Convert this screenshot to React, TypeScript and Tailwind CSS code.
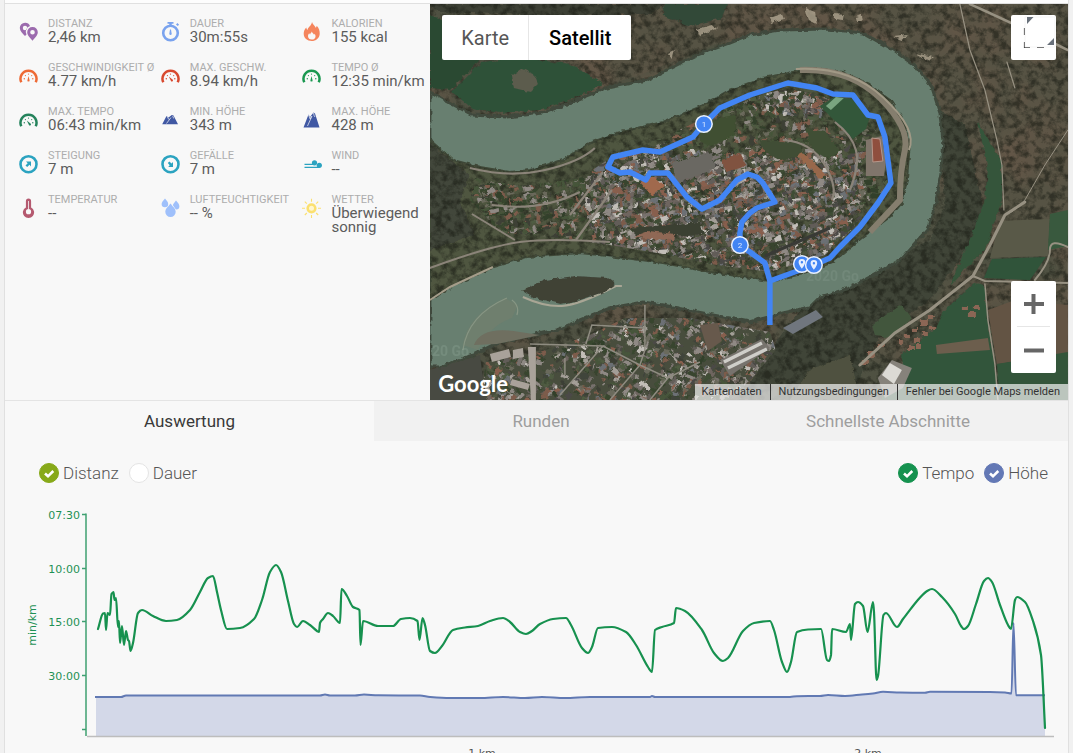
import { useId } from "react";
import type { ReactNode } from "react";

type Point = [number, number];

/* ---------- helpers ---------- */

// Monotone cubic through the points, so peaks never overshoot
function monotonePath(pts: Point[]): string {
  const n = pts.length;
  const slopes: number[] = [];
  for (let i = 0; i < n - 1; i++) {
    slopes.push((pts[i + 1][1] - pts[i][1]) / (pts[i + 1][0] - pts[i][0]));
  }
  const tangents = pts.map((_, i) => {
    if (i === 0) return slopes[0];
    if (i === n - 1) return slopes[n - 2];
    const a = slopes[i - 1];
    const b = slopes[i];
    return a * b <= 0 ? 0 : (2 * a * b) / (a + b);
  });
  let d = `M${pts[0][0]} ${pts[0][1]}`;
  for (let i = 0; i < n - 1; i++) {
    const [x0, y0] = pts[i];
    const [x1, y1] = pts[i + 1];
    const h = (x1 - x0) / 3;
    d += `C${(x0 + h).toFixed(1)} ${(y0 + h * tangents[i]).toFixed(1)} ${(x1 - h).toFixed(1)} ${(y1 - h * tangents[i + 1]).toFixed(1)} ${x1} ${y1}`;
  }
  return d;
}

function seeded(seed: number) {
  let s = seed;
  return () => {
    s = (s * 16807) % 2147483647;
    return s / 2147483647;
  };
}

/* ---------- stat icons ---------- */

function Icon({ children }: { children: ReactNode }) {
  return (
    <svg viewBox="0 0 20 20" className="mt-1 size-5 shrink-0" aria-hidden="true">
      {children}
    </svg>
  );
}

function PinsIcon() {
  return (
    <Icon>
      <path d="M6 .8a5.2 5.2 0 0 0-5.2 5.2c0 3 3 5.600 5.200 8l1.500-1.600A6 6 0 0 1 11 3.900 5.200 5.200 0 0 0 6 .8zm0 3a2.200 2.200 0 1 1 0 4.400 2.200 2.200 0 0 1 0-4.400z" fill="#9c6bae" fillRule="evenodd" />
      <path d="M13.500 5a5.200 5.200 0 0 0-5.300 5.200c0 3.200 3.300 6 5.300 8.600 2-2.600 5.300-5.400 5.300-8.600A5.200 5.200 0 0 0 13.500 5zm0 2.900a2.300 2.300 0 1 1 0 4.600 2.300 2.300 0 0 1 0-4.600z" fill="#9c6bae" fillRule="evenodd" />
    </Icon>
  );
}

function StopwatchIcon() {
  return (
    <Icon>
      <circle cx="9.500" cy="11" r="7.300" fill="none" stroke="#7aa3ee" strokeWidth="2.600" />
      <path d="M6.500 0h6v1.800h-1.800v2h-2.400v-2H6.500zM15 2.400l1.400-1.400 1.700 1.700-1.400 1.400z" fill="#7aa3ee" />
      <path d="M9 7.500h1l.7 4.200a1.200 1.200 0 1 1-2.400 0z" fill="#7aa3ee" />
    </Icon>
  );
}

function FlameIcon() {
  return (
    <Icon>
      <path d="M10 0c.8 2.500 2.800 3.600 3.700 5.800.6-.4.900-1.200 1-2 2.200 2.300 3.200 5.200 3 8.200-.3 4.300-3.700 7-8 7-4.400 0-8-2.800-8-7.200 0-2.600 1-4.800 2.600-6.300.1 1.200.5 2 1.200 2.400C5.800 5.400 9.600 3.500 10 0z" fill="#f5855d" />
      <path d="M9.800 9.500c.3 1.500 2 2 2.200 3.200.4-.2.500-.5.600-1 1 1.300 1.200 2.700.6 4-.6 1.200-1.900 1.900-3.400 1.900-2.200 0-3.800-1.300-3.800-3.300 0-1.300.6-2.300 1.300-3 .1.700.4 1.100.8 1.200 0-1.200 1.400-1.600 1.700-3z" fill="#f8f8f8" />
    </Icon>
  );
}

function GaugeIcon({ color, fast }: { color: string; fast?: boolean }) {
  return (
    <Icon>
      <path d="M2.300 16.200A8 8 0 1 1 16.700 16.200" fill="none" stroke={color} strokeWidth="2.500" />
      <g fill={color}>
        <circle cx="5.300" cy="12.800" r=".7" />
        <circle cx="6.400" cy="9.600" r=".6" />
        <circle cx="9.500" cy="8.100" r=".6" />
        <circle cx="12.700" cy="9.600" r=".6" />
        <circle cx="13.800" cy="12.800" r=".7" />
        {fast ? (
          <path d="M7.800 10.500l4 3.200a1.200 1.200 0 0 1-1.600 1.700z" />
        ) : (
          <path d="M9.500 10l1 4a1.100 1.100 0 1 1-2 0z" />
        )}
      </g>
    </Icon>
  );
}

function MountainIcon({ high }: { high?: boolean }) {
  return (
    <Icon>
      {high ? (
        <>
          <path d="M1.500 17.500L6.500 4.500l1.500 2.500 3.500-4.500 1.500 1 4.500 14z" fill="#4058a3" />
          <path d="M5.500 16L10 6M6.500 5l1.700 4 1.200-3M11.500 3l.7 3 1 1" fill="none" stroke="#f8f8f8" strokeWidth=".7" />
        </>
      ) : (
        <>
          <path d="M1.200 14.300L5.500 6l2 1.500 3.300-2.500 1.700.5 4.500 8.800z" fill="#4058a3" />
          <path d="M5.500 13.500L10 7.500M6.200 6.500l1.600 3M11.700 6l1 2.500" fill="none" stroke="#f8f8f8" strokeWidth=".7" />
        </>
      )}
    </Icon>
  );
}

function SlopeIcon({ down }: { down?: boolean }) {
  return (
    <Icon>
      <circle cx="9.500" cy="10.200" r="8" fill="none" stroke="#2ba3c0" strokeWidth="2.600" />
      {down ? (
        <path d="M6.800 9l1.600-1.600 2.100 2.100L12 8.100v4.800H7.200l1.500-1.600z" fill="#2ba3c0" />
      ) : (
        <path d="M7 7.400h5v5l-1.500-1.600-2.300 2.300-1.700-1.600 2.200-2.300z" fill="#2ba3c0" />
      )}
    </Icon>
  );
}

function WindIcon() {
  return (
    <Icon>
      <path d="M2.500 10.400h11M2.500 13.400h15" stroke="#2ba3c0" strokeWidth="1.300" />
      <circle cx="12.500" cy="8.800" r="2.600" fill="#2ba3c0" />
      <circle cx="17.300" cy="11.300" r="2.600" fill="#2ba3c0" />
    </Icon>
  );
}

function ThermometerIcon() {
  return (
    <Icon>
      <path d="M9.500.6a2.600 2.600 0 0 0-2.600 2.600v6.200a5.600 5.600 0 1 0 5.200 0V3.200A2.600 2.600 0 0 0 9.500.6z" fill="#b55a70" />
      <circle cx="9.500" cy="13.700" r="2.600" fill="#f8f8f8" />
      <path d="M9.500 3v8" stroke="#f8f8f8" strokeWidth=".8" />
    </Icon>
  );
}

function DropsIcon() {
  return (
    <Icon>
      <path d="M4 .4c1.600 2 3.200 3.500 3.200 5.500A3.200 3.200 0 0 1 .6 6C.6 4 2.400 2.400 4 .4zM15 2.500c1.700 2 3.400 3.600 3.400 5.700a3.300 3.300 0 0 1-3.500 3.200c-1-1.400-2.300-2.800-3-4.200.3-1.600 1.800-3 3.100-4.700z" fill="#9fc0fb" />
      <path d="M9.500 5.500c2.200 3 5.200 5.200 5.200 8.300a5.200 5.200 0 0 1-10.400 0c0-3.100 3-5.300 5.200-8.300z" fill="#9fc0fb" />
    </Icon>
  );
}

function SunIcon() {
  return (
    <Icon>
      <circle cx="9.500" cy="10.300" r="3.800" fill="#fff6cf" stroke="#fbe06f" strokeWidth="2.600" />
      <path d="M9.500 .7v3M9.500 17v3M0 10.300h3M16 10.300h3M2.800 3.600l2 2M14.200 15l2 2M2.800 17l2-2M14.200 5.600l2-2" stroke="#fbe06f" strokeWidth="1.100" />
    </Icon>
  );
}

const stats: { label: string; value: string; icon: ReactNode }[] = [
  { label: "Distanz", value: "2,46 km", icon: <PinsIcon /> },
  { label: "Dauer", value: "30m:55s", icon: <StopwatchIcon /> },
  { label: "Kalorien", value: "155 kcal", icon: <FlameIcon /> },
  { label: "Geschwindigkeit Ø", value: "4.77 km/h", icon: <GaugeIcon color="#ee6a35" /> },
  { label: "Max. Geschw.", value: "8.94 km/h", icon: <GaugeIcon color="#d8492f" fast /> },
  { label: "Tempo Ø", value: "12:35 min/km", icon: <GaugeIcon color="#1a9850" /> },
  { label: "Max. Tempo", value: "06:43 min/km", icon: <GaugeIcon color="#25835c" fast /> },
  { label: "Min. Höhe", value: "343 m", icon: <MountainIcon /> },
  { label: "Max. Höhe", value: "428 m", icon: <MountainIcon high /> },
  { label: "Steigung", value: "7 m", icon: <SlopeIcon /> },
  { label: "Gefälle", value: "7 m", icon: <SlopeIcon down /> },
  { label: "Wind", value: "--", icon: <WindIcon /> },
  { label: "Temperatur", value: "--", icon: <ThermometerIcon /> },
  { label: "Luftfeuchtigkeit", value: "-- %", icon: <DropsIcon /> },
  { label: "Wetter", value: "Überwiegend sonnig", icon: <SunIcon /> },
];

function StatsPanel() {
  return (
    <dl className="grid w-2/5 auto-rows-[44px] grid-cols-3 content-start pt-3.5">
      {stats.map((s) => (
        <div key={s.label} className="flex gap-[9px] pl-3.5">
          {s.icon}
          <div className="min-w-0">
            <dt className="text-[11px] leading-[12px] whitespace-nowrap text-[#adadad] uppercase">{s.label}</dt>
            <dd className="text-[15px] leading-[14px] text-[#5c5c5c]">{s.value}</dd>
          </div>
        </div>
      ))}
    </dl>
  );
}

/* ---------- map ---------- */

const RIVER =
  "M430 92L450 103 473 115 507 117 543 113 577 100 607 88 647 80 663 72 697 55 730 43 750 35 780 30 827 29 863 33 893 50 917 67 932 87 940 113 943 140 941 173 936 203 927 230 900 260 877 273 850 288 820 297 810 307 783 313 750 322 713 315 663 305 643 302 610 308 593 315 557 330 497 343 473 355 440 367 430 367Z";
const PENINSULA =
  "M430 300L450 287 493 267 527 257 580 253 617 257 663 263 710 272 750 278 770 281 807 273 833 262 863 237 890 217 902 203 907 180 910 143 903 120 890 100 867 83 843 72 817 68 793 72 763 78 730 90 697 108 663 122 617 133 590 143 563 160 530 170 510 172 480 167 453 160 430 140Z";
const OLD_TOWN =
  "M600 165L625 148 663 138 700 120 740 100 788 88 830 98 845 118 868 122 884 140 888 185 860 222 825 255 770 272 710 264 663 254 610 245 560 238 500 232 470 200 475 178 520 186 580 178Z";
const SOUTH_TOWN =
  "M480 400L486 362 540 352 590 335 625 318 690 318 770 332 776 350 755 375 730 400Z";
const ROUTE =
  "M770 325V281L765 263 750 252 740 245 740 233 742 222 750 213 757 208 775 202 763 183 757 177 748 174 737 180 720 200 702 209 687 197 668 173 650 173 646 180 630 172 620 173 608 167 613 157 643 150 660 152 693 137 704 124 720 108 750 95 788 83 817 88 833 94 853 95 868 115 878 117 885 137 891 183 878 203 860 227 840 247 830 258 814 265 770 281";

const ROOFS = ["#77716d", "#8f8984", "#625d59", "#7d5b4b", "#a39e97", "#4c4a47", "#6e655f", "#885f4e", "#39442f", "#3f4d35", "#6c7074", "#41443b", "#c2beb8"];
const GARDENS = ["#39472f", "#46553a", "#33402c", "#4f5b42", "#6b6a5c", "#8f8984", "#7d5b4b", "#3d3f36"];

function buildPatches(seed: number, count: number, x: number, y: number, w: number, h: number, angle: number, colors: string[]) {
  const rnd = seeded(seed);
  return Array.from({ length: count }, () => ({
    x: Math.round(x + rnd() * w),
    y: Math.round(y + rnd() * h),
    w: 2 + rnd() * 7,
    h: 1.5 + rnd() * 3.5,
    a: angle + Math.round(rnd() * 2) * 15 + (rnd() > 0.6 ? 90 : 0),
    fill: colors[Math.floor(rnd() * colors.length)],
  }));
}

const centreHouses = buildPatches(41, 2300, 590, 150, 270, 122, -35, ROOFS);
const northHouses = buildPatches(63, 900, 640, 85, 250, 120, -20, GARDENS);
const westHouses = buildPatches(17, 620, 465, 165, 170, 80, -30, GARDENS);
const terraceHouses = buildPatches(29, 180, 764, 90, 65, 22, 5, ROOFS);
const southHouses = buildPatches(97, 1100, 480, 315, 300, 85, 20, [...ROOFS, ...GARDENS]);

function Patches({ items }: { items: ReturnType<typeof buildPatches> }) {
  return (
    <>
      {items.map((b, i) => (
        <rect key={i} x={b.x} y={b.y} width={b.w} height={b.h} fill={b.fill} transform={`rotate(${b.a} ${b.x} ${b.y})`} />
      ))}
    </>
  );
}

function KmMarker({ x, y, label }: { x: number; y: number; label?: string }) {
  return (
    <g>
      <circle cx={x} cy={y} r="8.300" fill="#4285f4" stroke="#e8f0fe" strokeWidth="1.500" />
      {label ? (
        <text x={x} y={y + 3} textAnchor="middle" fontSize="8" fill="#dce8ff">
          {label}
        </text>
      ) : (
        <path d={`M${x} ${y - 5}a3.300 3.300 0 0 0-3.300 3.300c0 2.400 3.300 6.500 3.300 6.500s3.300-4.100 3.300-6.500a3.300 3.300 0 0 0-3.300-3.300zm0 2.100a1.200 1.200 0 1 1 0 2.400 1.200 1.200 0 0 1 0-2.400z`} fill="#e8f0fe" fillRule="evenodd" />
      )}
    </g>
  );
}

function SatelliteMap() {
  const id = useId().replace(/[^a-zA-Z0-9]/g, "");
  return (
    <svg viewBox="430 4 638 396" preserveAspectRatio="xMidYMid slice" className="absolute inset-0 size-full" role="img" aria-label="Satellitenkarte mit Laufstrecke">
      <defs>
        {/* dark speckles: the shade between tree crowns */}
        <filter id={`${id}trees`} x="0" y="0" width="100%" height="100%" colorInterpolationFilters="sRGB">
          <feTurbulence type="fractalNoise" baseFrequency="0.14" numOctaves="4" seed="7" />
          <feColorMatrix values="0 0 0 0 .1  0 0 0 0 .11  0 0 0 0 .08  3 0 0 0 -1.200" />
        </filter>
        <filter id={`${id}patches`} x="0" y="0" width="100%" height="100%" colorInterpolationFilters="sRGB">
          <feTurbulence type="fractalNoise" baseFrequency="0.018" numOctaves="4" seed="12" />
          <feColorMatrix values="0 0 0 0 .43  0 0 0 0 .35  0 0 0 0 .29  3 0 0 0 -1.200" />
        </filter>
        {/* ragged outlines for banks, tree lines and roofs */}
        <filter id={`${id}rough`} x="-5%" y="-5%" width="110%" height="110%">
          <feTurbulence type="fractalNoise" baseFrequency="0.18" numOctaves="2" seed="3" />
          <feDisplacementMap in="SourceGraphic" scale="5" xChannelSelector="R" yChannelSelector="G" />
        </filter>
        <clipPath id={`${id}pen`}><path d={PENINSULA} /></clipPath>
        <clipPath id={`${id}town`}><path d={OLD_TOWN} /></clipPath>
        <clipPath id={`${id}south`}><path d={SOUTH_TOWN} /></clipPath>
      </defs>

      {/* land outside the river loop */}
      <rect x="430" y="4" width="638" height="396" fill="#4f5142" />
      <path d="M560 4H1068V260L960 240 940 120 900 50 830 26 750 30 640 75 590 90Z" fill="#565344" />
      <rect x="430" y="4" width="638" height="396" filter={`url(#${id}patches)`} opacity=".5" />
      <g filter={`url(#${id}rough)`}>
        <path d="M430 4H665L650 14 560 16 440 12Z" fill="#3d4034" />
        <path d="M860 275L930 240 945 205 940 110 965 125 985 215 960 260 930 300 880 335 850 400H740L770 350 800 310Z" fill="#3f4437" />
      </g>
      <rect x="430" y="4" width="638" height="396" filter={`url(#${id}trees)`} opacity=".6" />

      {/* meadows and fields */}
      <g filter={`url(#${id}rough)`}>
        <path d="M430 15L470 30 480 60 450 90 430 88Z" fill="#2b4a33" />
        <path d="M452 92L482 62 520 58 570 64 603 84 575 98 540 110 500 113 472 108Z" fill="#2e5138" />
        <path d="M512 76l10-7 12 5 4 10-8 8-16-4z" fill="#5c5b4d" />
        <path d="M665 4H728L722 18 690 26 664 16Z" fill="#334838" />
        <path d="M978 122L992 145 1002 160 1002 200 985 250 950 285 970 240 985 200 988 170Z" fill="#35543a" />
        <path d="M975 283L985 285 988 320 1000 400H880L898 380 903 352 935 330 945 310Z" fill="#33543a" />
        <path d="M872 325L900 305 912 318 893 337 875 335Z" fill="#43573d" />
        <path d="M810 370L850 355 860 400H790Z" fill="#50513f" />
      </g>
      <path d="M1000 221L1050 219 1048 256 990 258Z" fill="#595948" />
      <path d="M1050 214L1068 210V246L1048 250Z" fill="#39593e" />
      <path d="M992 259L1046 257 1030 280 984 278Z" fill="#30543a" />
      <path d="M936 345L988 338 990 350 937 354Z" fill="#6c5e4d" />
      <path d="M988 310L1015 300 1068 305V355L997 364Z" fill="#635444" />
      <path d="M997 364L1068 352V400H1000Z" fill="#33553a" />

      {/* southern bank settlement */}
      <path d={SOUTH_TOWN} fill="#484d3d" />
      <g clipPath={`url(#${id}south)`} filter={`url(#${id}rough)`}>
        <Patches items={southHouses} />
      </g>
      <path d="M430 370L480 355 486 400H430Z" fill="#484a42" />
      <path d="M490 354l19-5 2 8-19 5zM513 350l10-2 1 9-11 2zM528 347h8v53h-5zM512 379l18 5-2 6-18-5z" fill="#a9a29a" />
      <g fill="none" stroke="#8f8c81" strokeWidth="1.500">
        <path d="M530 344L603 346 640 365 668 378 700 362M645 305V350L640 365M586 344L592 325 645 328M565 358V375M603 346L560 395M640 365L610 400M668 378L650 400" />
      </g>
      <path d="M700 325l18-2 4 18-14 10z" fill="#67594c" />
      <path d="M720 360L762 339 770 348 730 376Z" fill="#77736d" />
      <path d="M724 362L762 343M728 368L767 349" stroke="#cfcec9" strokeWidth="3.500" />
      <path d="M783 328L816 310 823 317 793 334Z" fill="#70767e" />
      <path d="M878 378L892 360 912 368 903 388 885 398Z" fill="#86827b" />
      <path d="M882 375L890 363 902 370 894 384Z" fill="#dcdad5" />
      <g filter={`url(#${id}rough)`} fill="#8b6654">
        <path d="M898 340h5v4h-5zM905 334h6v4h-6zM912 328h6v4h-6zM920 320h8v5h-8zM928 315h6v5h-6zM914 338h5v4h-5zM922 332h6v4h-6zM930 326h5v4h-5zM908 346h7v4h-7zM916 344h5v5h-5zM962 306h7v4h-7zM968 312h8v5h-8zM974 305h6v4h-6zM868 352h8v5h-8zM862 360h6v5h-6zM878 344h6v4h-6z" />
      </g>
      <g fill="none" stroke="#979182" strokeLinecap="round">
        <path d="M860 365L895 333 930 310 973 276 990 245 1005 215 1025 202" strokeWidth="3" />
        <path d="M973 276L985 281 1068 283M1035 280Q1050 262 1050 250T1068 247" strokeWidth="2" />
        <path d="M985 284L988 320 995 364 998 400" strokeWidth="1.500" />
        <path d="M960 4L970 50 985 90 997 140 1002 165 1004 210" strokeWidth="1.200" />
        <path d="M970 4Q1010 22 1068 50" strokeWidth="2.500" />
        <path d="M1068 130L1045 165 1025 200 1012 212" strokeWidth="1" />
        <path d="M1007 62l8 26" strokeWidth="1.200" />
      </g>
      <g fill="#b5aa95" opacity=".75" filter={`url(#${id}rough)`}>
        <path d="M770 18l12-4 2 5-12 4zM805 8l10 4 2 12-8-4zM834 14l10 1-1 5-9-1zM856 17l6-2 1 5-6 1zM893 37l14-2-4 5zM915 53l18 4-4 4zM697 29l16-4 4 4-18 6zM668 53l6-3-2 8z" />
      </g>

      {/* Salzach */}
      <path d={RIVER} fill="#687f70" stroke="#404a3c" strokeWidth="3" filter={`url(#${id}rough)`} />
      <path d="M463 345Q468 315 505 298L518 305 512 318Q490 325 478 350Z" fill="#6f7f6e" />
      <path d="M474 345Q482 325 520 332L540 335 497 344Z" fill="#6f6f60" />
      <path d="M463 350Q468 315 507 298M512 300q8 6 5 15" fill="none" stroke="#879684" strokeWidth="1.200" />
      <path d="M523 297Q545 307 562 306T616 286L622 286" fill="none" stroke="#a9a695" strokeWidth="2" />
      <path d="M522 290L545 280 575 276 608 278 616 284 605 292 580 300 560 304 535 298Z" fill="#3f4236" filter={`url(#${id}rough)`} />

      {/* peninsula */}
      <path d={PENINSULA} fill="#50563f" stroke="#3f4838" strokeWidth="2" filter={`url(#${id}rough)`} />
      <path d="M430 142L453 162 470 175 460 200 475 235 430 250Z" fill="#43463a" filter={`url(#${id}rough)`} />
      <g clipPath={`url(#${id}pen)`}>
        <rect x="430" y="60" width="490" height="245" filter={`url(#${id}trees)`} opacity=".6" />
      </g>
      <path d="M800 70Q850 68 880 98T905 150 900 200L870 232" fill="none" stroke="#857e6e" strokeWidth="6" />
      <path d="M796 69Q850 66 884 98T909 150" fill="none" stroke="#a19986" strokeWidth="2" />
      <g clipPath={`url(#${id}town)`}>
        <g filter={`url(#${id}rough)`}>
          <Patches items={northHouses} />
          <Patches items={westHouses} />
          <Patches items={centreHouses} />
          <Patches items={terraceHouses} />
        </g>
      </g>
      <g filter={`url(#${id}rough)`}>
        <path d="M700 128L718 118 735 115 735 135 712 146 700 142Z" fill="#3f4f31" />
        <path d="M760 140L800 142 805 155 780 160 762 150Z" fill="#404d34" />
        <path d="M805 128L825 132 840 150 830 160 812 150Z" fill="#3f4f34" />
        <path d="M630 228L700 222 704 234 640 238Z" fill="#3a3f31" />
        <path d="M672 163l40-10 3 16-38 14z" fill="#6a6862" />
        <path d="M722 160l18-6 6 12-20 6z" fill="#80523f" />
        <path d="M640 182l14-6 10 10-12 10z" fill="#a0694d" />
        <path d="M797 155l5-3 24 22-5 6z" fill="#98674b" />
        <path d="M634 236l14-5 28 3-2 6-26-1z" fill="#8f6754" />
      </g>
      <path d="M820 106l14-9 18 2 18 18-4 12-13 10-20-20z" fill="#33573a" />
      <path d="M826 106l10-9 8 1-13 12z" fill="#7aa480" />
      <path d="M866 140l16-4 4 26-2 14h-18z" fill="#80756b" />
      <path d="M872 138l8 1 3 22-10 1z" fill="#8f4f3e" stroke="#b8978a" strokeWidth="1" />
      <g fill="none" stroke="#8b8479">
        <path d="M783 140Q812 142 825 165T832 200M835 122Q852 135 856 150T850 190" strokeWidth="2.200" />
        <path d="M576 240L612 190M603 172L570 215M470 168Q510 178 545 170T595 148" strokeWidth="2.200" />
        <path d="M430 268Q490 246 520 242T610 242M472 214L515 240M492 205Q540 212 580 192" strokeWidth="2" />
        <path d="M430 300L450 287 493 267" stroke="#a59d8a" strokeWidth="2" />
        <path d="M765 256L830 228" stroke="#393a36" strokeWidth="3" />
      </g>

      <text x="806" y="281" fontSize="14" fontWeight="700" fill="#8fa596" opacity=".25">2020 Go</text>
      <text x="432" y="356" fontSize="14" fontWeight="700" fill="#93ab9b" opacity=".3">20 Go</text>

      <path d={ROUTE} fill="none" stroke="#4285f4" strokeWidth="5.500" strokeLinejoin="round" />
      <KmMarker x={704} y={124} label="1" />
      <KmMarker x={740} y={245} label="2" />
      <KmMarker x={802} y={264} />
      <KmMarker x={814} y={265} />
    </svg>
  );
}

function MapPanel() {
  return (
    <div className="relative w-3/5 overflow-hidden">
      <SatelliteMap />

      <div className="absolute top-[11px] left-3 flex h-[45px] rounded-xs bg-white text-[20px]">
        <button type="button" className="w-[86px] text-[#565656]">Karte</button>
        <button type="button" className="w-[103px] border-l border-[#e6e6e6] font-medium text-black">Satellit</button>
      </div>

      <button type="button" aria-label="Vollbild" className="absolute top-[11px] right-3 size-[45px] rounded-xs bg-white">
        <svg viewBox="0 0 45 45" className="size-full">
          <path d="M13.500 13v7M13.500 27v6M13 32.500h6M26 32.500h7" stroke="#444" strokeWidth="1.200" />
          <path d="M14 2h30v30H14z" fill="#fff" stroke="#eee" strokeWidth=".6" />
          <path d="M16 2h6.500L16 9zM43 23v7h-7z" fill="#68707a" />
        </svg>
      </button>

      <div className="absolute right-3 bottom-[27px] flex w-[45px] flex-col rounded-xs bg-white">
        <button type="button" aria-label="Vergrößern" className="h-[45px]">
          <svg viewBox="0 0 45 45" className="size-full">
            <path d="M22.500 13v20M13 23h20" stroke="#666" strokeWidth="4" />
          </svg>
        </button>
        <div className="mx-1.5 h-px bg-[#e6e6e6]" />
        <button type="button" aria-label="Verkleinern" className="h-[46px]">
          <svg viewBox="0 0 45 46" className="size-full">
            <path d="M13 23.500h20" stroke="#666" strokeWidth="4" />
          </svg>
        </button>
      </div>

      <a href="#google" className="absolute bottom-0 left-2 font-[Lato,sans-serif] text-[22px] leading-8 font-bold text-white">Google</a>

      <div className="absolute right-0 bottom-0 flex h-4 items-center bg-[#f5f5f5]/70 text-[11px] text-[#333]">
        <a href="#kartendaten" className="pr-2 pl-1.5">Kartendaten</a>
        <a href="#nutzung" className="border-l border-[#333] px-2">Nutzungsbedingungen</a>
        <a href="#fehler" className="border-l border-[#333] px-2">Fehler bei Google Maps melden</a>
      </div>
    </div>
  );
}

/* ---------- tabs and legend ---------- */

function Tabs() {
  return (
    <div role="tablist" className="grid h-10 grid-cols-[369fr_334fr_360fr] text-[17px]">
      <button type="button" role="tab" aria-selected="true" className="pt-0.5 text-[#3a3a3a]">Auswertung</button>
      <button type="button" role="tab" aria-selected="false" className="bg-[#f1f1f1] pt-0.5 text-[#9e9e9e]">Runden</button>
      <button type="button" role="tab" aria-selected="false" className="bg-[#f1f1f1] pt-0.5 text-[#9e9e9e]">Schnellste Abschnitte</button>
    </div>
  );
}

interface ToggleProps {
  label: string;
  type: "radio" | "checkbox";
  name: string;
  on: string;
  checked?: boolean;
}

function Toggle({ label, type, name, on, checked }: ToggleProps) {
  return (
    <label className="flex items-center gap-1">
      <span className="grid size-5">
        <input
          type={type}
          name={name}
          defaultChecked={checked}
          className={`peer size-5 appearance-none rounded-full border border-[#e4e4e4] bg-white [grid-area:1/1] ${on}`}
        />
        <svg viewBox="0 0 20 20" className="pointer-events-none invisible size-5 [grid-area:1/1] peer-checked:visible">
          <path d="M6 10.500l3 2.800 5.300-5.300" fill="none" stroke="#fff" strokeWidth="2.600" />
        </svg>
      </span>
      <span className="pt-0.5">{label}</span>
    </label>
  );
}

function Legend() {
  return (
    <div className="mt-[22px] mb-4 flex h-5 items-center justify-between pr-5 pl-[34px] text-[17px] font-light text-[#555]">
      <div className="flex gap-2.5">
        <Toggle type="radio" name="axis" label="Distanz" on="checked:border-[#87a919] checked:bg-[#87a919]" checked />
        <Toggle type="radio" name="axis" label="Dauer" on="checked:border-[#87a919] checked:bg-[#87a919]" />
      </div>
      <div className="flex gap-2.5">
        <Toggle type="checkbox" name="tempo" label="Tempo" on="checked:border-[#15924f] checked:bg-[#15924f]" checked />
        <Toggle type="checkbox" name="hoehe" label="Höhe" on="checked:border-[#6378b5] checked:bg-[#6378b5]" checked />
      </div>
    </div>
  );
}

/* ---------- chart ---------- */

const pace: Point[] = [
  [98, 629], [103, 613.5], [105, 613], [106, 630], [107.5, 613], [110, 615], [111.5, 594], [113.5, 592], [114.5, 600], [116, 598],
  [118, 627], [119, 621], [120, 643], [122, 626], [124, 645], [126, 631], [128, 640], [129, 641], [130.5, 651], [133, 643],
  [138, 613], [142, 610], [153, 616], [166, 621], [177, 620], [190, 610], [200, 592], [208, 578], [213, 576], [217, 592],
  [221, 610], [227, 629], [240, 628], [254, 619], [262, 600], [270, 572], [276, 565], [281, 572], [288, 601], [294, 624],
  [297, 627], [303, 621], [310, 625], [317, 631], [319, 632], [320, 623], [323, 619], [328, 613], [333, 616], [340, 623],
  [341.5, 589], [347, 596], [353, 607], [359.5, 610], [360.5, 645], [363, 621], [378, 626], [393, 626], [401, 619], [410, 618],
  [417.5, 621], [419.5, 640], [422.5, 618], [425, 625], [430, 651], [435, 653], [442, 646], [453, 630], [465, 627.5], [478, 626],
  [490, 621], [503, 618], [510, 622], [520, 632], [526, 634], [532, 631], [540, 624], [553, 619], [566, 618], [571, 625],
  [582, 648], [588, 653], [592, 647], [598, 628], [612, 627], [626, 632], [636, 645], [648, 667], [652, 672], [655, 630],
  [662, 627], [674, 623], [676, 608], [685, 611], [702, 630], [714, 653], [723, 661], [728, 658], [743, 631], [754, 623],
  [770, 621], [774, 630], [782, 662], [787, 672], [791, 662], [797, 632], [808, 629.5], [821, 629], [827, 660], [829, 661],
  [831, 655], [832, 629], [846, 632], [850, 624], [851, 640], [855, 604], [858, 602], [863, 606], [867.5, 632], [873, 602],
  [874, 612], [876.5, 680], [878, 676], [883.5, 615], [886, 613], [897, 627], [903, 619], [928, 590.5], [932, 589], [942, 597],
  [955, 614], [961, 626], [964, 629], [968, 626], [976, 604], [984, 581], [988, 578], [992, 582], [1000, 605], [1008, 625],
  [1011, 629], [1015, 600], [1017, 597], [1025, 602], [1033, 621], [1041, 655], [1045, 728],
];

const elevation: Point[] = [
  [95, 697], [121, 697], [126, 695.5], [320, 695.5], [325, 694.5], [330, 695.5], [355, 695.5], [364, 694.5], [378, 695.3],
  [420, 695.5], [430, 697], [450, 698], [480, 698], [503, 697], [525, 698], [542, 697], [565, 698], [590, 697], [650, 697],
  [652, 696], [655, 697], [790, 697], [797, 696.2], [820, 696], [828, 695], [845, 696], [862, 694.5], [873, 693.5], [883, 691.8],
  [900, 692.5], [925, 692.8], [930, 691.8], [990, 692], [1005, 692.5], [1011.5, 693.5], [1013.5, 623], [1016, 695.3], [1045, 695.3],
];

const ticks = [
  { y: 514, label: "07:30" },
  { y: 568, label: "10:00" },
  { y: 621, label: "15:00" },
  { y: 675, label: "30:00" },
  { y: 729, label: "" },
];

function PaceChart() {
  const heightLine = monotonePath(elevation);
  return (
    <svg viewBox="5 499 1063 266" className="block w-full font-[DejaVu_Sans,sans-serif]" role="img" aria-label="Tempo und Höhe über Distanz">
      <path d={`${heightLine}V736H96V697Z`} fill="#d3d8e8" />
      <path d="M87 736.500H1054" stroke="#bdbdbd" strokeWidth="1.500" />
      <path d={heightLine} fill="none" stroke="#6179b3" strokeWidth="2" strokeLinejoin="round" />
      <path d={monotonePath(pace)} fill="none" stroke="#17914f" strokeWidth="2.200" strokeLinejoin="round" strokeLinecap="round" />
      <g stroke="#3fa071" strokeWidth="1.500">
        <path d="M86 513.500V736" />
        {ticks.map((t) => (
          <path key={t.y} d={`M82 ${t.y + 0.5}h4`} />
        ))}
      </g>
      <g fontSize="11" fill="#1e9155">
        {ticks.map((t) => (
          <text key={t.y} x="80" y={t.y + 5} textAnchor="end">{t.label}</text>
        ))}
        <text transform="translate(36 625) rotate(-90)" textAnchor="middle">min/km</text>
      </g>
      <g fontSize="11" fill="#555" textAnchor="middle">
        <text x="482" y="757">1 km</text>
        <text x="868" y="757">2 km</text>
      </g>
    </svg>
  );
}

export default function App() {
  return (
    <main className="h-screen overflow-hidden bg-[#f1f1f1] px-1 font-[Roboto,sans-serif]">
      <div className="min-h-full border-x border-[#e0e0e0] bg-[#f8f8f8]">
        <div className="h-1 border-b border-[#e0e0e0] bg-[#fdfdfd]" />
        <section className="flex h-99">
          <StatsPanel />
          <MapPanel />
        </section>
        <section className="border-t border-[#e4e4e4]">
          <Tabs />
          <Legend />
          <PaceChart />
        </section>
      </div>
    </main>
  );
}
